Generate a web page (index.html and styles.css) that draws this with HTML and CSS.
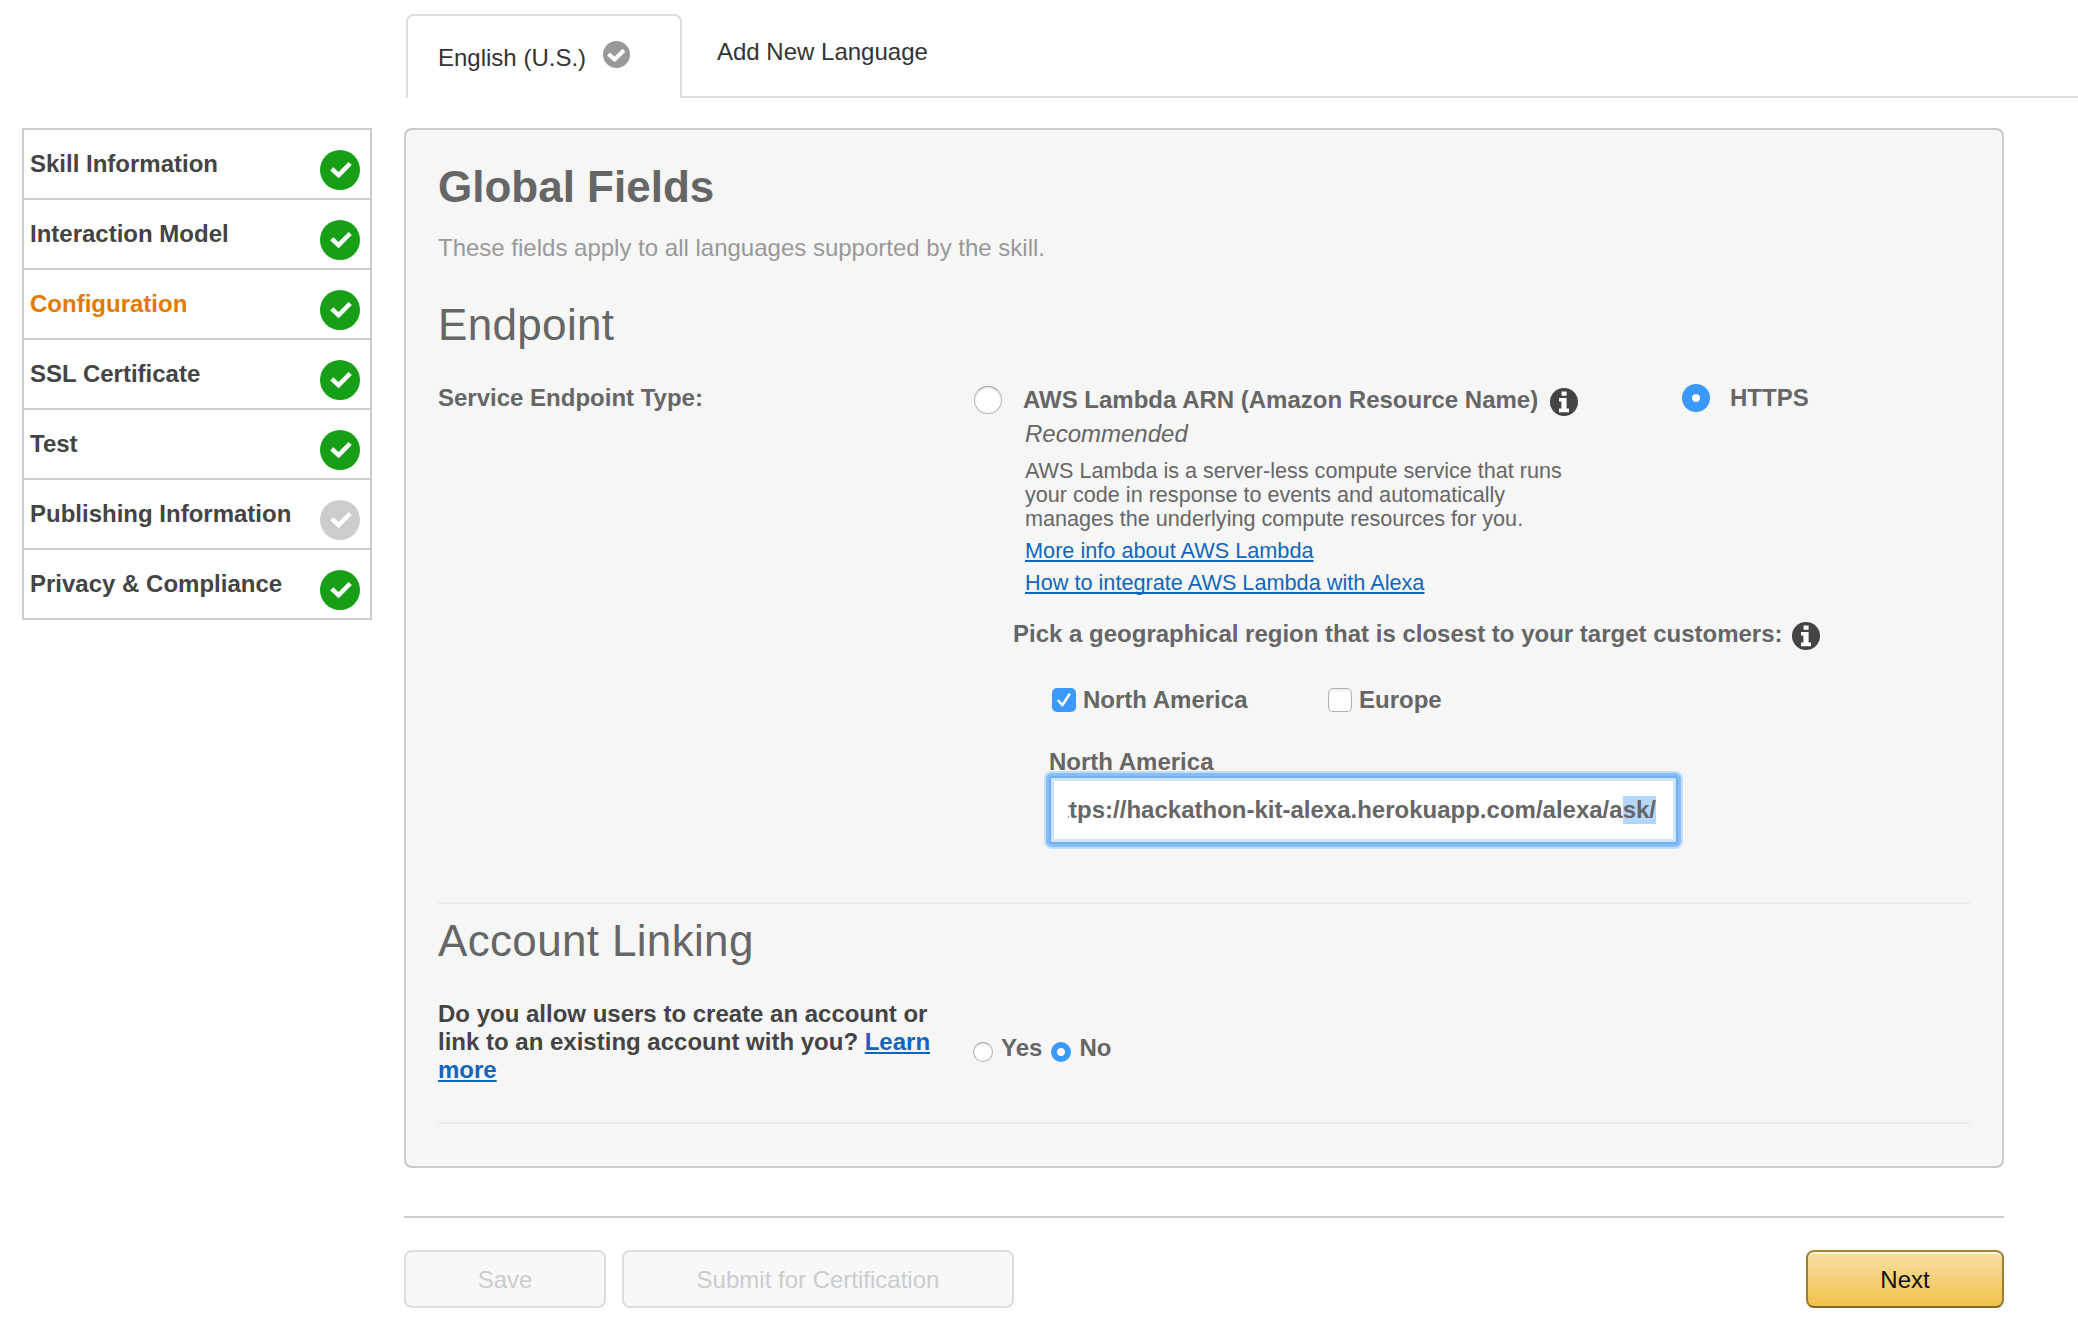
FILE: index.html
```html
<!DOCTYPE html>
<html lang="en">
<head>
<meta charset="utf-8">
<title>Skill Configuration</title>
<link rel="stylesheet" href="styles.css">
</head>
<body>
<svg width="0" height="0" class="defs">
  <symbol id="check" viewBox="0 0 40 40"><circle cx="20" cy="20" r="20"/><path d="M11.8 18.9 18.6 25.2 30.2 13.5" fill="none" stroke="#fff" stroke-width="4.5"/></symbol>
  <symbol id="tabcheck" viewBox="0 0 27 27"><circle cx="13.5" cy="13.5" r="13.5"/><path d="M5.5 12.9 11.6 18.5 21 9.2" fill="none" stroke="#fff" stroke-width="4.1"/></symbol>
  <symbol id="info" viewBox="0 0 28 28"><circle cx="14" cy="14" r="14"/><path fill="#fff" d="M11.6 3.4h5v4.4h-5zM9 10h7.6v10.6h2.4v3.6H9v-3.6h2.4v-7H9z"/></symbol>
</svg>
<nav class="tabs">
  <div class="tab active">English (U.S.)<svg class="tab-icon"><use href="#tabcheck"/></svg></div>
  <div class="tab add">Add New Language</div>
</nav>
<div class="layout">
  <ul class="steps">
    <li>Skill Information<svg><use href="#check"/></svg></li>
    <li>Interaction Model<svg><use href="#check"/></svg></li>
    <li class="current">Configuration<svg><use href="#check"/></svg></li>
    <li>SSL Certificate<svg><use href="#check"/></svg></li>
    <li>Test<svg><use href="#check"/></svg></li>
    <li>Publishing Information<svg class="pending"><use href="#check"/></svg></li>
    <li>Privacy &amp; Compliance<svg><use href="#check"/></svg></li>
  </ul>
  <main>
    <section class="panel">
      <h1>Global Fields</h1>
      <p class="hint">These fields apply to all languages supported by the skill.</p>
      <h2>Endpoint</h2>
      <div class="endpoint">
        <div class="label">Service Endpoint Type:</div>
        <div class="choices">
          <div class="types">
            <div class="lambda">
              <span class="radio"></span>
              <div class="lambda-text">
                <div class="arn"><span>AWS Lambda ARN (Amazon Resource Name)</span><svg class="info"><use href="#info"/></svg></div>
                <div class="rec">Recommended</div>
                <p class="desc">AWS Lambda is a server-less compute service that runs<br>your code in response to events and automatically<br>manages the underlying compute resources for you.</p>
                <a href="#">More info about AWS Lambda</a>
                <a href="#">How to integrate AWS Lambda with Alexa</a>
              </div>
            </div>
            <div class="https"><span class="radio on"></span>HTTPS</div>
          </div>
          <div class="pick"><span>Pick a geographical region that is closest to your target customers:</span><svg class="info"><use href="#info"/></svg></div>
          <div class="regions">
            <div class="region"><span class="box on"><svg viewBox="0 0 24 24"><path d="M6.5 12.8 10.3 17.3 17.3 6.5" fill="none" stroke="#fff" stroke-width="2.5" stroke-linecap="round" stroke-linejoin="round"/></svg></span>North America</div>
            <div class="region"><span class="box"></span>Europe</div>
          </div>
          <div class="url-label">North America</div>
          <div class="url"><div class="url-text"><span>https://hackathon-kit-alexa.herokuapp.com/alexa/a<mark>sk/</mark></span></div></div>
        </div>
      </div>
      <hr>
      <h2 class="account">Account Linking</h2>
      <div class="linking">
        <p>Do you allow users to create an account or<br>link to an existing account with you? <a href="#">Learn<br>more</a></p>
        <div class="yesno"><span class="radio small"></span><span class="yes">Yes</span><span class="radio small on"></span><span>No</span></div>
      </div>
      <hr>
    </section>
    <footer>
      <button class="save" disabled>Save</button>
      <button class="submit" disabled>Submit for Certification</button>
      <button class="next">Next</button>
    </footer>
  </main>
</div>
</body>
</html>
```
FILE: styles.css
```css
* { box-sizing: border-box; margin: 0; padding: 0; }
body { font: 24px/28px "Liberation Sans", Arial, sans-serif; color: #666; background: #fff; overflow: hidden; }
.defs { position: absolute; }
svg { display: block; flex: none; }
a { color: #1166bb; text-decoration: underline; text-decoration-thickness: 2px; text-underline-offset: 2px; text-decoration-skip-ink: none; }

.tabs { display: flex; height: 98px; padding: 14px 0 0 406px; color: #333; }
.tab.active { display: flex; width: 276px; border: 2px solid #ddd; border-bottom: 0; border-radius: 8px 8px 0 0; padding: 28px 0 0 30px; }
.tab-icon { width: 27px; height: 27px; margin: -3px 0 0 17px; fill: #999; }
.tab.add { flex: 1; border-bottom: 2px solid #ddd; padding: 24px 0 0 35px; }

.layout { display: flex; padding: 30px 0 0 22px; }
.steps { list-style: none; width: 350px; border: 2px solid #ccc; align-self: flex-start; font-weight: bold; color: #444; }
.steps li { display: flex; justify-content: space-between; height: 70px; padding: 20px 10px 0 6px; border-bottom: 2px solid #ccc; }
.steps li:last-child { height: 68px; border-bottom: 0; }
.steps svg { width: 40px; height: 40px; fill: #17a017; }
.steps svg.pending { fill: #ccc; }
.steps .current { color: #e07b00; }

main { width: 1600px; margin-left: 32px; }
.panel { height: 1040px; border: 2px solid #ccc; border-radius: 8px; background: #f6f6f6; padding: 32px 32px 0; }
h1, h2 { font-size: 44px; line-height: 50px; }
h2 { font-weight: normal; letter-spacing: .34px; }
.hint { color: #999; margin-top: 22px; }
.panel h2 { margin-top: 38px; }
.endpoint { display: flex; height: 518px; margin-top: 34px; font-weight: bold; }
.label { width: 536px; }
.choices { flex: 1; }
.types { display: flex; }
.lambda { display: flex; width: 708px; }
.radio { flex: none; display: block; width: 28px; height: 28px; border: 1px solid #b4b4b4; border-top-color: #9a9a9a; border-radius: 50%; background: #fff; box-shadow: inset 0 2px 2px #eee; }
.radio.on { border: 0; background: radial-gradient(circle, #fff 0 3.6px, #3b99fc 4.4px); box-shadow: none; }
.lambda .radio { margin-top: 2px; }
.lambda-text { margin-left: 21px; font-weight: normal; }
.arn, .pick { display: flex; font-weight: bold; }
.arn { padding-top: 2px; }
.info { width: 28px; height: 28px; fill: #444; margin: 2px 0 0 9px; }
.arn .info { margin-left: 12px; }
.rec { font-style: italic; padding-left: 2px; margin-top: 4px; }
.desc { font-size: 21.6px; line-height: 24px; margin: 11px 0 4px; padding-left: 2px; }
.lambda-text a { display: block; width: max-content; font-size: 21.7px; line-height: 32px; margin-left: 2px; }
.https { display: flex; }
.https .radio { margin: 0 20px 0 0; }
.pick { margin: 21px 0 0 39px; }
.regions { display: flex; margin: 36px 0 0 78px; }
.region { display: flex; width: 276px; }
.box { width: 24px; height: 24px; margin: 2px 7px 0 0; border: 1px solid #b0b0b0; border-radius: 5px; background: #fff; box-shadow: inset 0 2px 2px #eee; }
.box.on { border: 0; background: #3b99fc; box-shadow: none; }
.url-label { margin: 34px 0 0 75px; }
.url { width: 629px; height: 68px; margin: 0 0 0 75px; border: 2px solid #6fb0f4; border-radius: 3px; background: #fff; box-shadow: 0 0 0 3px #87bef9, 0 0 0 5px #c5def8, inset 0 0 0 3px #cfe5fd; padding: 18px 20px 0 17px; }
.url-text { display: flex; justify-content: flex-end; overflow: hidden; white-space: nowrap; }
mark { display: inline-block; background: #b3d7ff; color: inherit; }
hr { border: 0; height: 2px; background: #ececec; }
.panel h2.account { margin-top: 12px; }
.linking { display: flex; height: 122px; margin-top: 34px; font-weight: bold; color: #444; }
.linking p { width: 535px; }
.yesno { display: flex; color: #666; padding-top: 34px; }
.radio.small { width: 20px; height: 20px; margin: 8px 8px 0 0; }
.yes { margin-right: 9px; }

footer { display: flex; margin-top: 48px; border-top: 2px solid #ccc; padding-top: 32px; }
button { height: 58px; border-radius: 8px; font: 24px/28px "Liberation Sans", Arial, sans-serif; border: 2px solid #ddd; background: #f6f8fa; color: #ccc; padding-top: 2px; }
.save { width: 202px; }
.submit { width: 392px; margin-left: 16px; }
.next { width: 198px; margin-left: auto; color: #111; border-color: #a88734 #9c7e31 #846a29; background: linear-gradient(#f7dfa5, #f0c14b); box-shadow: inset 0 2px 0 #fcf3dc; }
```
